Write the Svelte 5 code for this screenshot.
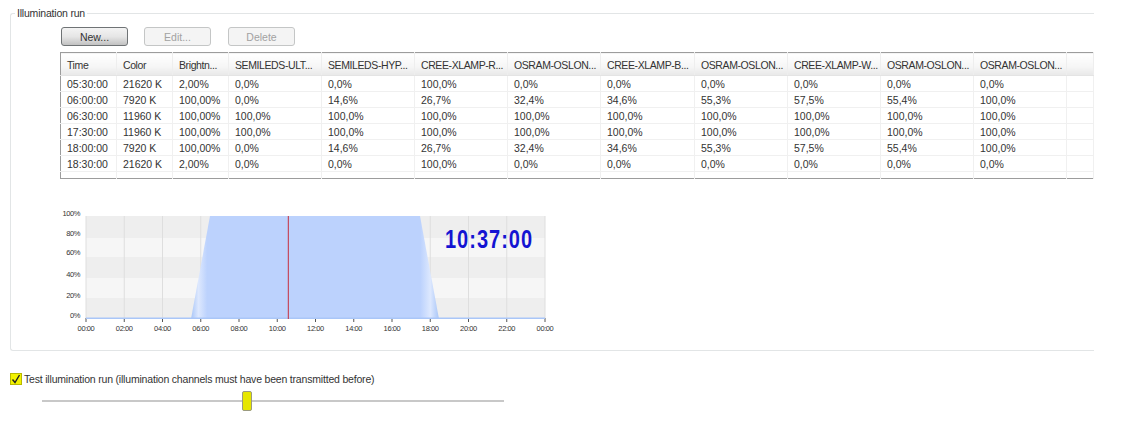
<script>
    const columns = [
        { label: "Time", width: 56 },
        { label: "Color", width: 56 },
        { label: "Brightn...", width: 56 },
        { label: "SEMILEDS-ULT...", width: 93 },
        { label: "SEMILEDS-HYP...", width: 93 },
        { label: "CREE-XLAMP-R...", width: 93 },
        { label: "OSRAM-OSLON...", width: 93 },
        { label: "CREE-XLAMP-B...", width: 94 },
        { label: "OSRAM-OSLON...", width: 93 },
        { label: "CREE-XLAMP-W...", width: 93 },
        { label: "OSRAM-OSLON...", width: 93 },
        { label: "OSRAM-OSLON...", width: 93 },
        { label: "", width: 27 }
    ];

    const off = ["0,0%", "0,0%", "100,0%", "0,0%", "0,0%", "0,0%", "0,0%", "0,0%", "0,0%"];
    const mid = ["0,0%", "14,6%", "26,7%", "32,4%", "34,6%", "55,3%", "57,5%", "55,4%", "100,0%"];
    const full = Array(9).fill("100,0%");

    const rows = [
        ["05:30:00", "21620 K", "2,00%", ...off],
        ["06:00:00", "7920 K", "100,00%", ...mid],
        ["06:30:00", "11960 K", "100,00%", ...full],
        ["17:30:00", "11960 K", "100,00%", ...full],
        ["18:00:00", "7920 K", "100,00%", ...mid],
        ["18:30:00", "21620 K", "2,00%", ...off]
    ];

    const plot = { left: 86, right: 545, top: 216, bottom: 318 };
    const hourX = (h) => plot.left + (h / 24) * (plot.right - plot.left);
    const hours = Array.from({ length: 13 }, (_, i) => i * 2);
    const bands = [
        { y: 216, h: 22, fill: "#eeeeee" },
        { y: 238, h: 19, fill: "#f6f6f6" },
        { y: 257, h: 21, fill: "#eeeeee" },
        { y: 278, h: 20, fill: "#f6f6f6" },
        { y: 298, h: 20, fill: "#eeeeee" }
    ];
    const yLabels = [
        { text: "100%", y: 216 },
        { text: "80%", y: 236 },
        { text: "60%", y: 255 },
        { text: "40%", y: 277 },
        { text: "20%", y: 298 },
        { text: "0%", y: 318 }
    ];
</script>

<div class="page">
    <fieldset class="group">
        <legend>Illumination run</legend>

        <div class="buttons">
            <button class="active">New...</button>
            <button disabled>Edit...</button>
            <button class="last" disabled>Delete</button>
        </div>

        <table>
            <colgroup>
                {#each columns as col}
                    <col style="width: {col.width}px" />
                {/each}
            </colgroup>
            <thead>
                <tr>
                    {#each columns as col}
                        <th>{col.label}</th>
                    {/each}
                </tr>
            </thead>
            <tbody>
                {#each rows as row}
                    <tr>
                        {#each row as cell}
                            <td>{cell}</td>
                        {/each}
                        <td></td>
                    </tr>
                {/each}
                <tr class="spare">
                    {#each columns as col}
                        <td></td>
                    {/each}
                </tr>
            </tbody>
        </table>

        <div class="chart">
            <svg width="500" height="140" viewBox="60 205 500 140">
                <defs>
                    <linearGradient id="ramp" gradientUnits="userSpaceOnUse" x1="191" y1="0" x2="439" y2="0">
                        <stop offset="0" stop-color="#a9c6f8" />
                        <stop offset="0.03" stop-color="#dde8fe" />
                        <stop offset="0.065" stop-color="#bcd2fd" />
                        <stop offset="0.925" stop-color="#bcd2fd" />
                        <stop offset="0.965" stop-color="#dde8fe" />
                        <stop offset="1" stop-color="#a9c6f8" />
                    </linearGradient>
                </defs>

                {#each bands as band}
                    <rect x={plot.left} y={band.y} width={plot.right - plot.left} height={band.h} fill={band.fill} />
                {/each}
                {#each hours as h}
                    <line x1={hourX(h)} x2={hourX(h)} y1={plot.top} y2={plot.bottom} stroke="#dedede" />
                    <line x1={hourX(h)} x2={hourX(h)} y1={plot.bottom} y2={plot.bottom + 4} stroke="#555" />
                    <text class="tick" x={hourX(h)} y="331" text-anchor="middle">{String(h % 24).padStart(2, "0")}:00</text>
                {/each}
                {#each yLabels as label}
                    <text class="tick" x="80" y={label.y} text-anchor="end">{label.text}</text>
                {/each}

                <polygon points="191,319 210,216 420,216 439,319" fill="url(#ramp)" />
                <rect x={plot.left} y="317.5" width={plot.right - plot.left} height="1.5" fill="#a9c6f8" />
                <line x1="288.3" x2="288.3" y1={plot.top} y2="319" stroke="#c62f3d" />
            </svg>
            <span class="clock">10:37:00</span>
        </div>
    </fieldset>

    <div class="test">
        <span class="check">
            <svg width="10" height="10" viewBox="0 0 10 10">
                <path d="M1.5 5.5 L4 8.5 L8.5 1" fill="none" stroke="#222" stroke-width="1.4" />
            </svg>
        </span>
        <span class="test-label">Test illumination run (illumination channels must have been transmitted before)</span>
    </div>

    <div class="slider">
        <div class="thumb"></div>
    </div>
</div>

<style>
    :global(body) {
        margin: 0;
        background: #fff;
    }
    .page {
        width: 1145px;
        height: 432px;
        overflow: hidden;
        padding: 6px 0 0 10px;
        box-sizing: border-box;
        font-family: "Liberation Sans", Arial, sans-serif;
        font-size: 10.5px;
        color: #333;
    }
    .group {
        box-sizing: border-box;
        width: 1084px;
        height: 345px;
        margin: 0;
        padding: 7px 0 0 50px;
        border: 1px solid #e2e5e6;
        border-right: none;
        border-radius: 3px 0 0 3px;
    }
    legend {
        margin-left: -46px;
        padding: 0 2px;
        line-height: 14px;
        font-size: 10.5px;
        letter-spacing: -0.2px;
    }
    .buttons {
        display: flex;
        gap: 16px;
    }
    button {
        width: 67px;
        height: 19px;
        padding: 0;
        font: inherit;
        color: #a2a2a2;
        background: #f4f4f4;
        border: 1px solid #c4c6c6;
        border-radius: 3px;
    }
    button.last {
        margin-left: 1px;
    }
    button.active {
        color: #333;
        border-color: #6f7375;
        background: linear-gradient(#f3f3f3, #e6e6e6 50%, #c2c2c2);
    }
    table {
        table-layout: fixed;
        border-collapse: collapse;
        width: 1034px;
        margin: 6px 0 0 -1px;
        border-top: 1px solid #9c9c9c;
        border-bottom: 1px solid #9c9c9c;
        border-left: 1px solid #9c9c9c;
    }
    th {
        box-sizing: border-box;
        height: 23px;
        padding: 2px 0 0 6px;
        font-weight: normal;
        text-align: left;
        letter-spacing: -0.4px;
        white-space: nowrap;
        overflow: hidden;
        background: linear-gradient(#fff, #f6f6f6 60%, #e8e8e8);
        border-right: 1px solid #eeeeee;
        border-bottom: 1px solid #e4e4e4;
    }
    td {
        height: 15px;
        padding: 0 0 0 6px;
        white-space: nowrap;
        overflow: hidden;
        border-right: 1px solid #f0f0f0;
        border-bottom: 1px solid #f0f0f0;
    }
    .spare td {
        height: 6px;
        border-bottom: none;
    }
    .chart {
        position: relative;
        width: 500px;
        height: 140px;
        margin: 26px 0 0 -1px;
    }
    .chart svg {
        display: block;
    }
    .tick {
        font-size: 7.5px;
        letter-spacing: -0.4px;
        fill: #333;
    }
    .clock {
        position: absolute;
        left: 385px;
        top: 20px;
        font-weight: bold;
        font-size: 20px;
        line-height: 28px;
        letter-spacing: 1px;
        color: #1414d2;
        transform: scaleY(1.25);
    }
    .test {
        display: flex;
        align-items: center;
        gap: 2px;
        height: 14px;
        margin-top: 21px;
    }
    .test-label {
        letter-spacing: -0.19px;
    }
    .check {
        display: flex;
        align-items: center;
        justify-content: center;
        width: 10px;
        height: 10px;
        border: 1px solid #b8b800;
        background: #f2f200;
    }
    .slider {
        position: relative;
        width: 462px;
        height: 2px;
        margin: 14px 0 0 32px;
        background: #c8c8c8;
    }
    .thumb {
        position: absolute;
        left: 200px;
        top: -9px;
        box-sizing: border-box;
        width: 10px;
        height: 20px;
        background: #e6e600;
        border: 1px solid #9a9a80;
        border-radius: 2px;
    }
</style>
